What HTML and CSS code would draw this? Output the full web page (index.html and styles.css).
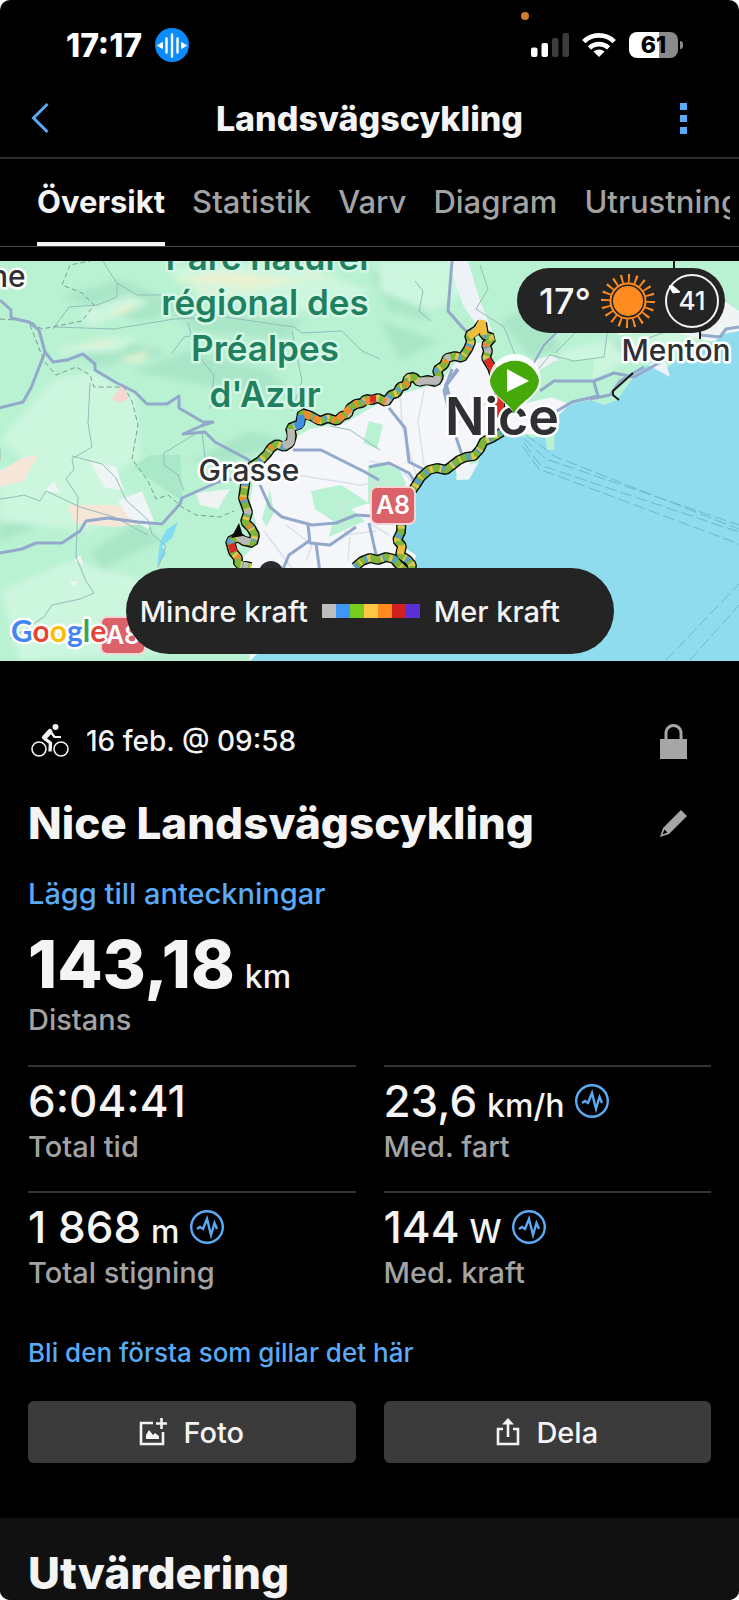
FILE: index.html
```html
<!DOCTYPE html>
<html lang="sv">

<head>
  <meta charset="UTF-8" />
  <meta name="viewport" content="width=device-width, initial-scale=1.0" />
  <title>Landsvägscykling</title>
  <link rel="stylesheet" href="styles.css">
</head>

<body>
  <div class="app">
    <div class="status-bar">
      <span class="mic-dot"></span>
      <div class="status-left">
        <span class="clock">17:17</span>
        <svg class="voice-icon" viewBox="0 0 34 34" aria-hidden="true">
          <circle cx="17" cy="17" r="17" fill="#0a8cff" />
          <path d="M17 6.500v22M11.500 10.500v14M22.500 10.500v14" stroke="#fff" stroke-width="2.400" stroke-linecap="round" />
          <path d="M2.500 17.500l5-3v6zM31.500 17.500l-5-3v6z" fill="#fff" stroke="#fff" stroke-linejoin="round" />
        </svg>
      </div>
      <div class="status-right">
        <svg class="signal-icon" viewBox="0 0 38 24" aria-hidden="true">
          <rect x="0" y="14.500" width="6.500" height="9.500" rx="2" fill="#fff" />
          <rect x="10.500" y="10" width="6.500" height="14" rx="2" fill="#fff" />
          <rect x="21" y="5" width="6.500" height="19" rx="2" fill="#3c3c3c" />
          <rect x="31.500" y="0" width="6.500" height="24" rx="2" fill="#3c3c3c" />
        </svg>
        <svg class="wifi-icon" viewBox="0 0 34 24" aria-hidden="true">
          <path d="M17 24l-5.600-5.400a8.200 8.200 0 0 1 11.200 0z" fill="#fff" />
          <path d="M7.500 15a13.500 13.500 0 0 1 19 0" fill="none" stroke="#fff" stroke-width="4.600" />
          <path d="M1.800 8.600a21.800 21.800 0 0 1 30.400 0" fill="none" stroke="#fff" stroke-width="4.800" />
        </svg>
        <div class="battery"><span class="battery-level">61</span><span class="battery-tip"></span></div>
      </div>
    </div>

    <header class="header">
      <button type="button" class="icon-button" aria-label="Tillbaka">
        <svg class="back-icon" viewBox="0 0 18 30" aria-hidden="true">
          <path d="M16.500 1L2.500 15l14 14" fill="none" stroke="#5aaaf5" stroke-width="3" />
        </svg>
      </button>
      <h1>Landsvägscykling</h1>
      <button type="button" class="icon-button menu-button" aria-label="Mer">
        <svg class="more-icon" viewBox="0 0 7 31" aria-hidden="true">
          <path d="M0 0h7v7H0zM0 12h7v7H0zM0 24h7v7H0z" fill="#5aaaf5" />
        </svg>
      </button>
    </header>

    <nav class="tabs" aria-label="Aktivitet">
      <ul>
        <li><a href="#" class="active" aria-current="page">Översikt</a></li>
        <li><a href="#">Statistik</a></li>
        <li><a href="#">Varv</a></li>
        <li><a href="#">Diagram</a></li>
        <li><a href="#">Utrustning</a></li>
      </ul>
    </nav>

    <main>
      <div class="map">
        <svg class="map-canvas" viewBox="0 0 739 400" preserveAspectRatio="xMidYMid slice" aria-label="Karta">
          <defs>
            <filter id="relief">
              <feGaussianBlur stdDeviation="3" />
            </filter>
            <path id="route-north" d="M501 156L499 128L492 107L486 97L488 90L486 84L492 77L484 74L482 62L477 69L469 74L471 81L468 88L462 97L455 95L447 97L444 104L437 109L439 116L436 121L427 119L419 121L414 116L408 117L406 124L400 126L397 132L391 134L386 141L378 137L372 139L366 138L362 142L356 143L350 147L348 153L342 155L337 160L328 157L320 160L311 155L302 152L300 163L290 167L292 175L290 182L284 186L277 183L271 187L267 193L260 200L252 205L246 213L245 224L243 237L248 251L245 261L251 267L255 274L253 282L244 280L238 276L230 280L233 291L238 297L238 303L251 306" />
            <path id="route-south" d="M502 171L492 177L484 180L480 188L474 195L466 196L459 199L446 209L437 207L429 209L421 216L416 224L402 244L401 271L397 279L402 285L400 294L408 299L412 304L411 312M355 306L362 300L370 297L378 299L386 296L394 298L399 304L408 312" />
          </defs>

          <!-- terräng -->
          <rect width="739" height="400" fill="#b9f1d3" />
          <g filter="url(#relief)">
            <g fill="#a9e6c7">
              <path d="M60 36l60-18 70 30-50 12zM70 92l60-10 40 10-70 14zM155 40l60 14 90 4-20 20-90-8z" />
              <path d="M130 110l60-20 80 20 30 30-60-10zM190 200l60-30 40 10-60 20z" />
              <path d="M369 10l50 10 10 40-40-10zM380 60l60 20-40 20zM500 60l40-20 20 50-30 6zM590 90l60-20-30 40z" />
              <path d="M0 260l60-30 20 20-80 30zM90 290l50-30 20 20-60 30z" />
            </g>
            <g fill="#cdf6df">
              <path d="M52 120l40-10 44 26 4 60-40 24-60-10-40-30zM0 210l80-10 60 40-50 30-90-10z" />
              <path d="M80 50l50-16 20 8-60 24zM60 86l80-12-20 16-60 4zM160 6l130-6 80 30-60 20-100-14z" />
              <path d="M380 0h70l20 30-40 20-50-20zM560 90l50-10 20 20-60 30zM0 330l70-30 120 30-20 60-150 10z" />
              <path d="M620 80l60-20 40 10-70 30z" />
            </g>
            <g fill="#e9f2d2">
              <path d="M112 50l26-10-6 8-20 8zM74 85l44-9-14 9zM190 28l70 6-50 4zM300 8l40 10-30-2z" />
              <path d="M116 99l36-10-14 12zM170 20l50-10 90 10-60 8z" />
            </g>
          </g>
          <path d="M150 194h30l2 30 0 16-32-22-16-12z" fill="#a9e8c8" />
          <g fill="#f5e6d8">
            <path d="M0 210l24-14 14-2-14 26-24 6zM68 244l50 0 36 18-40 4-40-4z" />
            <path d="M112 138l12-16 4 16-8 4z" fill="#f6d5cd" />
          </g>
          <g fill="#eff5f4">
            <path d="M90 200l26 6 8 24-20-4zM118 240l24-10 12 30-6 8-20-12zM44 230l10-10 6 12zM70 320h8l-4 6zM74 300l6-6 4 10z" />
            <path d="M600 40l60-10 50 0 29 20v30l-30 0-40-10-50 4z" />
          </g>
          <path d="M448 0h20l12 40 12 30-14-4-14-20zM532 100l20-6 22 16-30 18-20 0z" fill="#edf2f6" />
          <path d="M196 232l34-4-12 20-18-4z" fill="#eff3f3" />

          <!-- tätort -->
          <path d="M256 206L292 178L310 168L345 162L390 136L440 122L470 82L484 82L496 112L512 130L540 132L572 144L556 157L545 174L502 171L479 196L456 212L429 214L416 227L402 264L396 281L416 294L416 400L250 400L240 300L260 278L250 240z" fill="#f4f6fa" />
          <g fill="#b9f1d3">
            <path d="M311 230l30-6 28 18-18 6 14 12-36 16 4-16-18-12zM368 205l12-4 20 8 6 14-14 16-24 4z" />
            <path d="M369 160l14 4-6 24-14-6zM524 120l30-20 40-2-2 26-30 10-36 8z" />
            <path d="M262 258l8-30 4 24-8 14z" />
          </g>

          <!-- hav och sjöar -->
          <path d="M739 70L724 73L712 82L690 84L669 106L655 99L636 113L617 139L604 144L590 139L569 144L556 157L554 189L547 189L545 174L532 177L502 171L484 185L479 200L469 219L456 219L456 207L429 214L416 227L402 264L396 281L416 294L413 310L330 340L256 394L250 400L739 400z" fill="#8edcee" />
          <path d="M648 104l22 12-4-14-10-2zM457 207l22-6-10 17-12 1z" fill="#eef3f8" />
          <path d="M178 261l-6 16-10 8 4 8-9 12 3-24 6-12z" fill="#84dcf2" />

          <!-- småvägar -->
          <g fill="none" stroke="#95bcb9" stroke-width="1">
            <path d="M103 0l6 10 8 12v14l-20 8-28 2-16 22M54 66l60 2 60-10 50-2 70 10 8 6 40-2 20 20 18 8" />
            <path d="M117 22l20 12h30M188 62l8 30 8 10 10 12-4 34M172 92l12-16 12-2M292 70l10 50-10 30" />
            <path d="M90 122l-2 40 4 24-20 12 2 10-8 10 12 18-2 60 10 24 8 12-14 6-28 6-8 12-34 22" />
            <path d="M72 195l30 8 14 14 10 22 22 20 4 14 14 12-8 22M0 238l14-2 10-2 16 6 6-10 34 16 34 10 34 18" />
            <path d="M200 170l-36 22v12l14 10 6 16M202 170l4 36M0 200v-12M415 20l8 10-4 20 12 10M480 4l8 24-12 20 28 18 12 30 8 22" />
            <path d="M520 130l30-36 24 6 30-4 4-30M555 92l30-30 20 0M640 80l34-12 4-10M330 165l20 4 30 20" />
          </g>
          <g fill="none" stroke="#dbe0e9" stroke-width="1.500">
            <path d="M400 130l2 34 14 50M424 130l-6 30 6 44M284 212l76 12 28-4M340 240l6 34 30-4M348 300l2-24M306 300l6-16-26-20M264 270l30 40" />
            <path d="M369 200l30 6 14 16M500 120l-20 30-26 14M369 262l20 12" />
          </g>

          <!-- parkgränser -->
          <path d="M0 58l30 2 12 8 40-8 12-16-12-12-20-8 8-20 20-4M30 64l14 36 12 14 20-8 14 8 4 12 30 0 8 14 6 24-6 34 16 22 8 18 12-4 14 12 14 8 24 2 14-6" fill="none" stroke="#7c9d90" stroke-dasharray="5 3" />

          <!-- huvudvägar -->
          <g fill="none" stroke="#93a9cb" stroke-width="3" stroke-linejoin="round">
            <path d="M0 39l11 10v8l18 4 10 8 6 22 8 10 14-2 16-6 12 10v6l20 12 20 10 12 12 20 0 12-8 0 12 24 14 10 0-12 4-18 8 22-2 10 10 34 18 4 10 20 6" />
            <path d="M45 91l-14 36-8 14-24 6M0 292l22-4 14-6 26 0 18-12 6-10 22-3 30 4 24 2 18-20 2-6 36-16 20-4" />
            <path d="M293 189l28 0 44 22 14 8M260 224l10 22 12 10 30 8 24-2 20-8 30 2M308 264l2 18 20 2 26-18M309 280l-20 14-6 14M316 282l4 30" />
            <path d="M452 0l-4 50 14 16 8 8M452 108l-8 22 10 40 8 24M389 147l16 20 4 34 20 10" />
            <path d="M540 130l14-10 40 0 20-8 20 4 32-18M594 121l4 14-26 6-20 12M700 74l20 2 6-8 13-2M369 206l20-4 20 10 8 12M369 262l8 36" />
            <path d="M590 138l20-4 10-14 24-14" />
            <path d="M458 108l-12 16 4 16" stroke-width="4" />
            <path d="M528 112l16-28 30-30" stroke-width="2" />
          </g>
          <path d="M633 112l-20 18 0 4 6 5M674 0v10M700 66v12" fill="none" stroke="#1b1b1b" stroke-width="2" />

          <!-- färjelinjer -->
          <g fill="none" stroke="#68b9d2" stroke-width="1" stroke-dasharray="12 4">
            <path d="M524 178l22 20 193 66M524 182l16 22 199 67M523 186l16 22 200 75M526 174l30 22 183 72" />
            <path d="M666 399l73-76M690 399l49-55" />
          </g>

          <text class="label label-dark" x="-10" y="26">ne</text>
          <g class="label label-park">
            <text x="267" y="9">Parc naturel</text>
            <text x="265" y="54">régional des</text>
            <text x="265" y="100">Préalpes</text>
            <text x="265" y="146">d'Azur</text>
          </g>

          <!-- rutt -->
          <g fill="none" stroke-linejoin="bevel">
            <g stroke="#0b0b0b" stroke-width="10">
              <use href="#route-north" />
              <use href="#route-south" />
            </g>
            <g stroke="#7fb53a" stroke-width="7">
              <use href="#route-north" />
              <use href="#route-south" />
            </g>
            <g stroke="#5aa0c8" stroke-width="7" stroke-dasharray="3 9 4 14">
              <use href="#route-north" />
              <use href="#route-south" />
            </g>
            <g stroke="#dcc850" stroke-width="7" stroke-dasharray="2 7 3 11" stroke-dashoffset="-6">
              <use href="#route-north" />
              <use href="#route-south" />
            </g>
            <g stroke="#b9b9b9" stroke-width="7" stroke-dasharray="5 42" stroke-dashoffset="-20">
              <use href="#route-north" />
            </g>
            <g stroke="#f08a2a" stroke-width="7">
              <use href="#route-north" stroke-dasharray="3 28" stroke-dashoffset="-12" />
              <path d="M372 139L362 142M350 147L337 160M320 160L304 153" stroke-dasharray="7 3" />
              <path d="M402 285l-2 8M469 76l8-6 5-10 2 14" stroke="#eebf3c" />
            </g>
            <path d="M501 156L499 128L492 107L487 98M376 138l-6 0M231 283l3 8" stroke="#dc2a25" stroke-width="7" />
            <path d="M437 115v5l-18 0M291 168v14l-8 2M250 281l-12-4" stroke="#b9b9b9" stroke-width="7" />
            <path d="M301 154v9l-6 3" stroke="#3f8fe6" stroke-width="7" />
          </g>
          <path d="M231 277l8-15 4 13z" fill="#0b0b0b" />
          <circle cx="271" cy="312" r="12" fill="#2b2b2d" />

          <text class="label label-dark" x="249" y="220" text-anchor="middle">Grasse</text>
          <text class="label label-dark" x="676" y="100" text-anchor="middle">Menton</text>
          <text class="label label-dark label-city" x="502" y="174" text-anchor="middle">Nice</text>
          <path d="M515 155c-3-11-26-20-26-36a26 26 0 0 1 52 0c0 16-23 25-26 36z" fill="#fff" opacity="0.900" />
          <path d="M514 153c-3-11-24-18-24-34a25 24 0 0 1 49 0c0 16-22 23-25 34z" fill="#45a90a" />
          <path d="M507 108v23l22-11z" fill="#fff" />

          <g class="shield">
            <rect x="371" y="226" width="44" height="37" rx="6" />
            <text x="393" y="253">A8</text>
          </g>
          <g class="shield">
            <rect x="101" y="356" width="44" height="37" rx="6" />
            <text x="123" y="383">A8</text>
          </g>
          <text class="label label-google" x="11" y="381"><tspan fill="#4285f4">G</tspan><tspan fill="#ea4335">o</tspan><tspan fill="#fbbc05">o</tspan><tspan fill="#4285f4">g</tspan><tspan fill="#34a853">l</tspan><tspan fill="#ea4335">e</tspan></text>
        </svg>

        <div class="weather">
          <span class="temperature">17°</span>
          <svg class="sun-icon" viewBox="-27 -27 54 54" aria-hidden="true">
            <circle r="15" fill="#ff8a1f" />
            <circle r="17.500" fill="none" stroke="#ff8a1f" stroke-width="2" />
            <circle r="22.500" fill="none" stroke="#ff8a1f" stroke-width="9" stroke-dasharray="2 5.225" pathLength="144.500" />
          </svg>
          <svg class="wind-icon" viewBox="-27 -27 54 54" aria-label="Vind 41">
            <circle r="26" fill="none" stroke="#f4f4f4" stroke-width="2" />
            <path d="M-23-15l4 7 7-1-7-6z" fill="#fff" stroke="#fff" />
            <text y="9">41</text>
          </svg>
        </div>

        <div class="legend">
          <span>Mindre kraft</span>
          <span class="legend-scale"><i></i><i></i><i></i><i></i><i></i><i></i><i></i></span>
          <span>Mer kraft</span>
        </div>
      </div>

      <section class="details">
        <div class="row date-row">
          <svg class="bike-icon" viewBox="0 0 38 34" aria-hidden="true">
            <g fill="none" stroke="#f4f4f4">
              <circle cx="8" cy="25" r="7" stroke-width="1.600" />
              <circle cx="30" cy="25" r="7" stroke-width="1.600" />
              <path d="M19 7.500l-5.500 6" stroke-width="5" stroke-linecap="round" />
              <path d="M13.500 14.500l6 4.500-.5 8.500" stroke-width="3.400" stroke-linejoin="round" />
              <path d="M19.500 7.500l4 5.500h6.500" stroke-width="2.200" stroke-linejoin="round" />
            </g>
            <circle cx="24.500" cy="3" r="3" fill="#f4f4f4" />
          </svg>
          <time datetime="02-16T09:58">16 feb. @ 09:58</time>
          <svg class="lock-icon" viewBox="0 0 27 35" role="img" aria-label="Privat">
            <path d="M6 16V8.500a7.500 7 0 0 1 15 0V16" fill="none" stroke="#a6a6a6" stroke-width="3" />
            <path d="M0 15h27v20H0z" fill="#a6a6a6" />
          </svg>
        </div>

        <div class="row title-row">
          <h2>Nice Landsvägscykling</h2>
          <button type="button" class="edit-button" aria-label="Redigera namn">
            <svg class="edit-icon" viewBox="0 0 27 27" aria-hidden="true">
              <path d="M21 0l6 6L9 24l-9 3 3-9zM4.500 19.500L2.500 24.500l5-2z" fill="#a6a6a6" fill-rule="evenodd" />
            </svg>
          </button>
        </div>

        <a href="#" class="notes-link">Lägg till anteckningar</a>

        <dl class="distance">
          <dd>143,18 <small>km</small></dd>
          <dt>Distans</dt>
        </dl>

        <dl class="stats">
          <div class="stat">
            <dd>6:04:41</dd>
            <dt>Total tid</dt>
          </div>
          <div class="stat">
            <dd>23,6 <small>km/h</small>
              <svg class="pulse-icon" viewBox="0 0 34 34" aria-hidden="true">
                <circle cx="17" cy="17" r="15.800" />
                <path d="M7 19l3-2 3 2 4-10 4 16 3.500-12 2.500 6" />
              </svg>
            </dd>
            <dt>Med. fart</dt>
          </div>
          <div class="stat">
            <dd>1&nbsp;868 <small>m</small>
              <svg class="pulse-icon" viewBox="0 0 34 34" aria-hidden="true">
                <circle cx="17" cy="17" r="15.800" />
                <path d="M7 19l3-2 3 2 4-10 4 16 3.500-12 2.500 6" />
              </svg>
            </dd>
            <dt>Total stigning</dt>
          </div>
          <div class="stat">
            <dd>144 <small>W</small>
              <svg class="pulse-icon" viewBox="0 0 34 34" aria-hidden="true">
                <circle cx="17" cy="17" r="15.800" />
                <path d="M7 19l3-2 3 2 4-10 4 16 3.500-12 2.500 6" />
              </svg>
            </dd>
            <dt>Med. kraft</dt>
          </div>
        </dl>

        <a href="#" class="like-link">Bli den första som gillar det här</a>

        <div class="actions">
          <button type="button">
            <svg class="photo-icon" viewBox="0 0 28 28" aria-hidden="true">
              <path d="M14 5H2v21h22V14" fill="none" stroke="#f4f4f4" stroke-width="2.600" />
              <path d="M22.500 0v11M17 5.500h11" stroke="#f4f4f4" stroke-width="2.600" />
              <path d="M7 21v-4l3-5 4 5 2-2 4 3v3z" fill="#f4f4f4" />
            </svg>
            Foto
          </button>
          <button type="button">
            <svg class="share-icon" viewBox="0 0 24 28" aria-hidden="true">
              <path d="M7 11H2v15h20V11h-5M12 19V3" fill="none" stroke="#f4f4f4" stroke-width="2.600" />
              <path d="M12 0l6 6.500H6z" fill="#f4f4f4" />
            </svg>
            Dela
          </button>
        </div>
      </section>

      <section class="evaluation">
        <h2>Utvärdering</h2>
      </section>
    </main>
  </div>
</body>

</html>
```

FILE: styles.css
```css
/* Globala stilar */
* {
  box-sizing: border-box;
}

body {
  margin: 0;
  background-color: #fff;
  font-family: Inter, "Liberation Sans", sans-serif;
  font-weight: 500;
  color: #f4f4f4;
}

h1,
h2,
dl,
dd,
ul {
  margin: 0;
  padding: 0;
}

a {
  color: #5aaaf5;
  text-decoration: none;
}

button {
  padding: 0;
  border: none;
  background: none;
  font: inherit;
  color: inherit;
  cursor: pointer;
}

svg {
  display: block;
  flex: none;
}

.app {
  min-height: 100vh;
  background-color: #000;
  border-radius: 10px;
  overflow: hidden;
}

/* Statusrad */
.status-bar {
  position: relative;
  display: flex;
  justify-content: space-between;
  align-items: center;
  height: 79px;
  padding: 11px 56px 0 66px;
}

.status-left,
.status-right {
  display: flex;
  align-items: center;
  gap: 13px;
}

.clock {
  font-size: 32px;
  font-weight: 800;
  color: #fff;
}

.mic-dot {
  position: absolute;
  top: 12px;
  right: 210px;
  width: 8px;
  height: 8px;
  border-radius: 50%;
  background-color: #d07c2a;
}

.voice-icon {
  width: 34px;
  height: 34px;
}

.signal-icon {
  width: 38px;
  height: 24px;
}

.wifi-icon {
  width: 34px;
  height: 24px;
}

.battery {
  display: flex;
  align-items: center;
  gap: 2px;
}

.battery-level {
  width: 49px;
  border-radius: 8px;
  background: linear-gradient(to right, #fff 61%, #8a8a8a 61%);
  font-size: 23px;
  font-weight: 800;
  line-height: 26px;
  text-align: center;
  color: #000;
}

.battery-tip {
  width: 3px;
  height: 8px;
  border-radius: 0 4px 4px 0;
  background-color: #8a8a8a;
}

/* Sidhuvud */
.header {
  display: grid;
  grid-template-columns: 1fr auto 1fr;
  align-items: center;
  height: 80px;
  padding: 0 28px;
  border-bottom: 2px solid #2e2e2e;
}

.header h1 {
  font-size: 34px;
  font-weight: 800;
}

.icon-button {
  display: flex;
  justify-content: center;
  width: 24px;
}

.menu-button {
  justify-self: end;
  width: 55px;
}

.back-icon {
  width: 18px;
  height: 30px;
}

.more-icon {
  width: 7px;
  height: 31px;
}

/* Flikar */
.tabs {
  padding: 0 9px 0 37px;
  border-bottom: 1px solid #4a4a4a;
}

.tabs ul {
  display: flex;
  gap: 27px;
  list-style: none;
  overflow: hidden;
}

.tabs a {
  display: block;
  padding: 25px 0 22px;
  border-bottom: 4px solid transparent;
  font-size: 31px;
  line-height: 36px;
  color: #a3a3a3;
}

.tabs .active {
  border-bottom-color: #f4f4f4;
  font-weight: 700;
  color: #f4f4f4;
}

/* Karta */
.map {
  position: relative;
  height: 400px;
  margin-top: 14px;
}

.map-canvas {
  width: 100%;
  height: 100%;
}

.label {
  font-size: 30px;
  font-weight: 500;
  stroke: #fff;
  stroke-width: 5px;
  stroke-linejoin: round;
  paint-order: stroke;
}

.label-dark {
  fill: #2f3033;
}

.label-city {
  font-size: 52px;
  font-weight: 600;
}

.label-park {
  fill: #1f8160;
  stroke: #d5f7e5;
  font-size: 35px;
  font-weight: 600;
  text-anchor: middle;
}

.label-google {
  font-family: Lato, sans-serif;
  font-size: 30px;
  font-weight: 700;
}

.shield rect {
  fill: #db6268;
  stroke: #f6d5d6;
  stroke-width: 2px;
}

.shield text {
  fill: #fff;
  font-size: 25px;
  font-weight: 600;
  text-anchor: middle;
}

.weather {
  position: absolute;
  top: 7px;
  right: 14px;
  display: flex;
  align-items: center;
  gap: 10px;
  height: 65px;
  padding: 0 6px 0 22px;
  border-radius: 33px;
  background-color: #242424;
}

.temperature {
  font-size: 36px;
}

.sun-icon,
.wind-icon {
  width: 54px;
  height: 54px;
}

.wind-icon text {
  fill: #f4f4f4;
  font-size: 26px;
  text-anchor: middle;
}

.legend {
  position: absolute;
  bottom: 7px;
  left: 17%;
  display: flex;
  align-items: center;
  gap: 14px;
  height: 86px;
  padding: 0 54px 0 14px;
  border-radius: 43px;
  background-color: #242424;
  font-size: 29px;
}

.legend-scale {
  display: flex;
}

.legend-scale i {
  width: 14px;
  height: 14px;
  background-color: #bdbdbd;
}

.legend-scale i:nth-child(2) {
  background-color: #3f97f5;
}

.legend-scale i:nth-child(3) {
  background-color: #78cc1e;
}

.legend-scale i:nth-child(4) {
  background-color: #ffc745;
}

.legend-scale i:nth-child(5) {
  background-color: #ff8a1f;
}

.legend-scale i:nth-child(6) {
  background-color: #d02020;
}

.legend-scale i:nth-child(7) {
  background-color: #5a2fd6;
}

/* Aktivitetsdetaljer */
.details {
  padding: 63px 28px 55px;
}

.row {
  display: flex;
  align-items: center;
  padding-right: 24px;
}

.date-row {
  gap: 17px;
  height: 34px;
  padding-left: 3px;
  font-size: 28px;
}

.date-row .lock-icon {
  margin-left: auto;
}

.bike-icon {
  width: 38px;
  height: 34px;
}

.lock-icon {
  width: 27px;
  height: 35px;
}

.title-row {
  justify-content: space-between;
  margin-top: 38px;
}

.details h2,
.evaluation h2 {
  font-size: 44px;
  font-weight: 800;
  line-height: 54px;
}

.edit-icon {
  width: 27px;
  height: 27px;
}

.notes-link {
  display: block;
  margin-top: 26px;
  font-size: 29px;
  line-height: 36px;
}

.distance {
  display: flex;
  flex-direction: column;
  gap: 2px;
  margin: 16px 0 27px;
}

.distance dd,
.stat dd {
  display: flex;
  align-items: baseline;
  gap: 10px;
}

.distance dd {
  font-size: 66px;
  font-weight: 800;
  line-height: 72px;
}

.distance dt,
.stat dt {
  font-size: 29px;
  line-height: 36px;
  color: #a3a3a3;
}

small {
  font-size: 32px;
  font-weight: 500;
  line-height: 1;
}

.stats {
  display: grid;
  grid-template-columns: 1fr 1fr;
  gap: 26px 28px;
}

.stat {
  display: flex;
  flex-direction: column;
  gap: 4px;
  padding-top: 10px;
  border-top: 2px solid #333;
}

.stat dd {
  font-size: 44px;
  line-height: 48px;
}

.pulse-icon {
  align-self: center;
  width: 34px;
  height: 34px;
  fill: none;
  stroke: #5aaaf5;
  stroke-width: 2.4;
}

.like-link {
  display: block;
  margin-top: 46px;
  font-size: 26px;
  line-height: 32px;
}

.actions {
  display: grid;
  grid-template-columns: 1fr 1fr;
  gap: 28px;
  margin-top: 32px;
}

.actions button {
  display: flex;
  justify-content: center;
  align-items: center;
  gap: 16px;
  height: 62px;
  border-radius: 6px;
  background-color: #3b3b3b;
  font-size: 29px;
}

.photo-icon {
  width: 28px;
  height: 28px;
}

.share-icon {
  width: 24px;
  height: 28px;
}

/* Utvärdering */
.evaluation {
  padding: 28px 28px 0;
  background-color: #111;
}
```
